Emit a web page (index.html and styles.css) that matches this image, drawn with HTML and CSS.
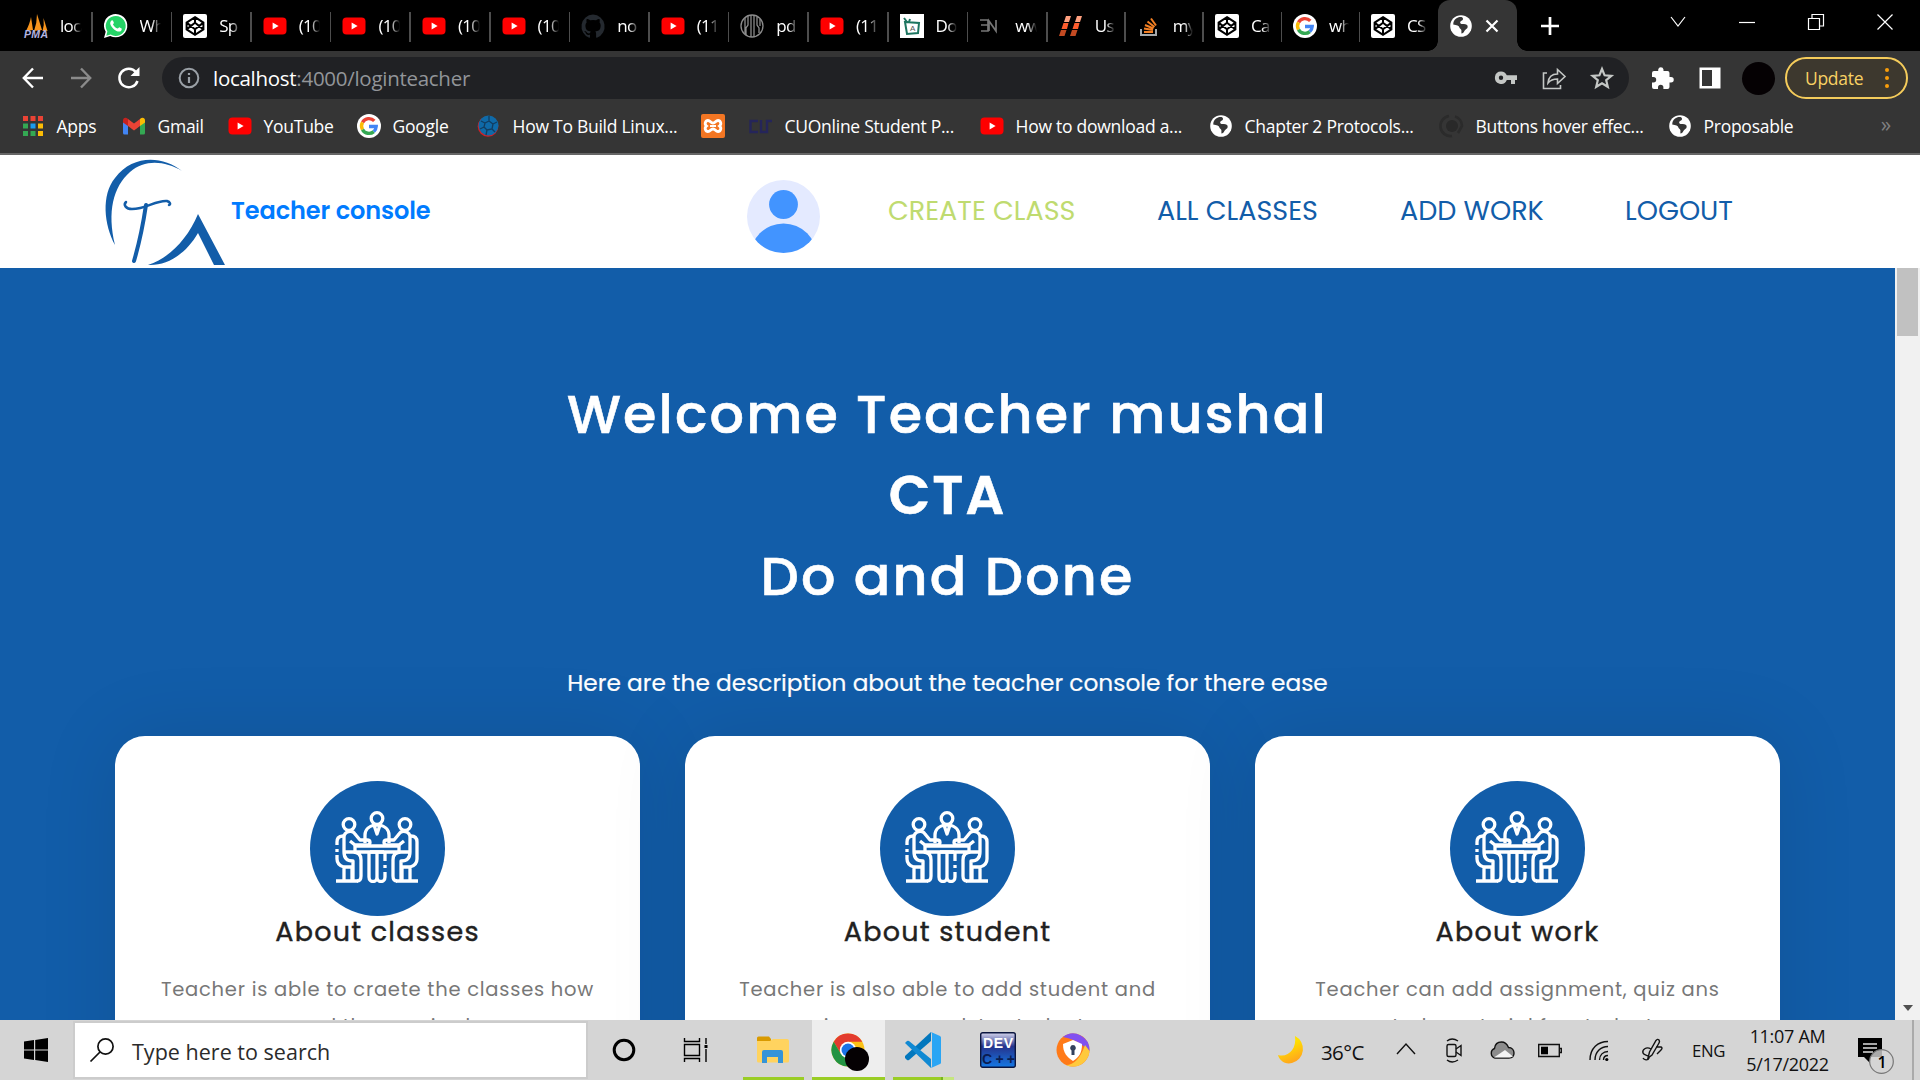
FILE: index.html
```html
<!DOCTYPE html>
<html lang="en">
<head>
<meta charset="utf-8">
<title>Teacher console</title>
<link rel="stylesheet" href="styles.css">
</head>
<body>
<svg class="defs" aria-hidden="true">
  <symbol id="yt" viewBox="0 0 24 24"><rect x="0.5" y="3.5" width="23" height="17" rx="4" fill="#f00"/><path d="M9.6 8.6v6.8l6-3.4z" fill="#fff"/></symbol>
  <symbol id="codepen" viewBox="0 0 24 24"><rect width="24" height="24" rx="2" fill="#fff"/><path d="M12 3.2l8.4 5.4v6.8L12 20.8l-8.4-5.4V8.6zM12 3.2v5.6M12 15.2v5.6M3.6 8.6L12 15.2l8.4-6.6M3.6 15.4L12 8.8l8.4 6.6" fill="none" stroke="#000" stroke-width="2"/></symbol>
  <symbol id="google" viewBox="0 0 24 24"><circle cx="12" cy="12" r="12" fill="#fff"/><g fill="none" stroke-width="3.4"><path d="M17.3 6.9A7.4 7.4 0 0 0 5.5 8.4" stroke="#ea4335"/><path d="M5.5 8.4a7.4 7.4 0 0 0 0 7.2" stroke="#fbbc05"/><path d="M5.5 15.6a7.4 7.4 0 0 0 11.3 2" stroke="#34a853"/><path d="M16.8 17.6a7.4 7.4 0 0 0 2.4-5.1H12" stroke="#4285f4"/></g></symbol>
  <symbol id="globe" viewBox="0 0 24 24"><circle cx="12" cy="12" r="10.8" fill="#fff"/><path d="M9 3.500c3-.9 5-.3 5 1.400 0 1.600-1.900 1.600-2.700 2.800-.7 1.200.6 2.500 2.700 2.400 2.600-.2 4.900.5 4.700 2.800-.2 2-2.500 2.200-3.300 4-.6 1.400-1.500 2.300-3 2.600v-3.200c0-1.400-2.100-1.300-2.200-3.200-.1-1.500-2.400-2.300-6-2.700 0-3.300 2-5.800 4.800-6.900z" fill="#353535"/></symbol>
  <symbol id="meeting" viewBox="0 0 84 72"><g fill="none" stroke="#fff" stroke-width="3.3" stroke-linejoin="round">
    <circle cx="42" cy="7.500" r="5.800"/><path d="M30 32v-8c0-6 5-9 9-10l3 9 3-9c4 1 9 4 9 10v8M39 14h6"/>
    <circle cx="14" cy="13.500" r="5.800"/><circle cx="70" cy="13.500" r="5.800"/>
    <path d="M9 41V26c0-5 8-8 11-3l5 6h7c4 0 4 5 0 5H20l-5-4M75 41V26c0-5-8-8-11-3l-5 6h-7c-4 0-4 5 0 5h12l5-4"/>
    <path d="M20 35h44v6H20zM9 41h11M75 41H64M9 41c0 6 3 9 9 9v20M75 41c0 6-3 9-9 9v20M18 41c6 0 8 3 8 8v16c0 3-1 5-4 5M66 41c-6 0-8 3-8 8v16c0 3 1 5 4 5"/>
    <path d="M34 41v25c0 6 8 6 8 0V41M50 41v9M50 54v3M42 66c0 6 8 6 8 0v-5M35 41h14"/>
    <path d="M8 25c-5 0-6 3-6 6v3M2 38v3M2 44v4c0 5 3 7 7 8h8M76 25c5 0 6 3 6 6v17c0 5-3 7-7 8h-8M9 56v14M17 56v14M75 56v14M67 56v14M1 70h22M61 70h22"/>
  </g></symbol>
</svg>

<header class="chrome">
  <div class="tabstrip">
    <div class="tabs">
      <div class="tab"><svg viewBox="0 0 24 24"><path d="M2 17Q6 9 7 3l2 13zM10 17q3-8 3-17l5 16zM18.500 17q2-6 1-13l4 13z" fill="#f7941d"/><text x="0" y="23.500" font-family="Liberation Sans" font-weight="700" font-style="italic" font-size="10.500" fill="#b4b4e0" textLength="24">PMA</text></svg><span>loca</span></div>
      <div class="tab"><svg viewBox="0 0 24 24"><path d="M0 24l1.700-6.200A11.700 11.700 0 1 1 6.200 22z" fill="#fff"/><path d="M2.300 21.700l1.100-4.200A10 10 0 1 1 6.700 20.600z" fill="#25d366"/><path d="M7.300 6.700c.8-.8 1.400-.6 1.700 0l.9 2.100c.1.500-.9 1.300-.9 1.600 1 2 2.500 3.300 4.700 4.200.5 0 1.200-1.400 1.600-1.300l2.300 1.100c.6.400-.2 2.300-1 2.800-2 1-4.600-.2-6.500-1.700-2-1.700-3.700-4-3.900-5.900-.1-1.200.500-2.300 1.100-2.900z" fill="#fff"/></svg><span>Wh</span></div>
      <div class="tab"><svg><use href="#codepen"/></svg><span>Sp</span></div>
      <div class="tab"><svg><use href="#yt"/></svg><span>(10</span></div>
      <div class="tab"><svg><use href="#yt"/></svg><span>(10</span></div>
      <div class="tab"><svg><use href="#yt"/></svg><span>(10</span></div>
      <div class="tab"><svg><use href="#yt"/></svg><span>(10</span></div>
      <div class="tab"><svg viewBox="0 0 24 24"><path d="M12 .5a12 12 0 0 0-3.800 23.200c.6.1.8-.2.800-.6v-2.300c-3.300.7-4-1.400-4-1.400-.6-1.400-1.400-1.800-1.400-1.800-1-.7.1-.7.100-.7 1.200 0 1.900 1.200 1.900 1.200 1 1.900 2.900 1.300 3.500 1 .1-.8.400-1.300.7-1.600-2.600-.3-5.400-1.300-5.400-6 0-1.200.500-2.300 1.300-3.200-.2-.4-.6-1.600.1-3.200 0 0 1-.3 3.300 1.200a11.500 11.500 0 0 1 6 0C17.400 4.800 18.400 5.100 18.400 5.100c.7 1.600.3 2.800.1 3.200.8.900 1.200 1.900 1.200 3.200 0 4.700-2.800 5.700-5.500 6 .5.400.9 1.100.9 2.200v3.400c0 .4.200.7.800.6A12 12 0 0 0 12 .5z" fill="#24292f"/></svg><span>no</span></div>
      <div class="tab"><svg><use href="#yt"/></svg><span>(11</span></div>
      <div class="tab"><svg viewBox="0 0 24 24" fill="none" stroke="#8c8c8c" stroke-width="1.300"><circle cx="12" cy="12" r="11"/><path d="M5 4v16M8 2v9l-2 3v7M11 1v22M14 1v22M17 3v8l2 3v5M20 5v7"/></svg><span>pd</span></div>
      <div class="tab"><svg><use href="#yt"/></svg><span>(11</span></div>
      <div class="tab"><svg viewBox="0 0 24 24"><path fill="#fff" d="M0 0h24v24H0z"/><path d="M5 8l14 1-1 10-11 1zM7 8L4 4M9 8l1-3" fill="none" stroke="#1d7560" stroke-width="2"/><text x="10" y="17" font-size="8" font-family="Liberation Sans" fill="#555">A</text></svg><span>Do</span></div>
      <div class="tab"><svg viewBox="0 0 24 24" fill="none" stroke="#777" stroke-width="1.700"><path d="M1 6h8v11H2M2 11h7M10 17V7l7 10V6"/></svg><span>ww</span></div>
      <div class="tab"><svg viewBox="0 0 24 24"><path d="M7 2h5l-2 6H5zM18 2h5l-2 6h-5z" fill="#ffa07f"/><path d="M4.500 9h5L8 15H2.500zM15.500 9h5L19 15h-5.500z" fill="#ff5c2c"/><path d="M2 16h5.500L5.500 22H0zM13 16h5.500l-2 6H11z" fill="#c34a22"/></svg><span>Us</span></div>
      <div class="tab"><svg viewBox="0 0 24 24" fill="none"><path d="M4 15v6h15v-6" stroke="#a5a9ac" stroke-width="2"/><path d="M7 18h9M7 14.500l9 1.500M8 11l8.500 3.500M10.500 7.500l7 5.500M14 4.500l5 7" stroke="#f48024" stroke-width="2"/></svg><span>my</span></div>
      <div class="tab"><svg><use href="#codepen"/></svg><span>Ca</span></div>
      <div class="tab"><svg><use href="#google"/></svg><span>wh</span></div>
      <div class="tab"><svg><use href="#codepen"/></svg><span>CS</span></div>
    </div>
    <div class="tab-active"><svg class="i24"><use href="#globe"/></svg><svg class="close" viewBox="0 0 14 14"><path d="M1.500 1.500l11 11M12.500 1.500l-11 11" stroke="#fff" stroke-width="2.200"/></svg></div>
    <svg class="newtab" viewBox="0 0 18 18"><path d="M9 0v18M0 9h18" stroke="#fff" stroke-width="2.700"/></svg>
    <div class="winctl">
      <svg viewBox="0 0 16 16"><path d="M1 3l7 9 7-9"/></svg>
      <svg viewBox="0 0 16 16"><path d="M0 8.500h16"/></svg>
      <svg viewBox="0 0 16 16"><path d="M.5 4.500h11v11H.5zM4 4V.5h11.500V12H12"/></svg>
      <svg viewBox="0 0 16 16"><path d="M.5.5l15 15M15.500.5l-15 15"/></svg>
    </div>
  </div>

  <div class="toolbar">
    <div class="navbtns">
      <svg viewBox="0 0 24 24"><path d="M22 12H3M12 2.500L2.800 12l9.200 9.500" stroke="#fff"/></svg>
      <svg viewBox="0 0 24 24"><path d="M2 12h19M12 2.500l9.200 9.500-9.200 9.500" stroke="#8b8b8b"/></svg>
      <svg viewBox="0 0 24 24"><path d="M20.500 15A9.300 9.300 0 1 1 19 6.200" stroke="#fff" stroke-width="2.500"/><path d="M22.500 1v9h-9z" fill="#fff"/></svg>
    </div>
    <div class="omnibox">
      <svg class="info" viewBox="0 0 22 22"><circle cx="11" cy="11" r="9.300" fill="none" stroke="#9aa0a6" stroke-width="2"/><path d="M11 10v6M11 6v2" stroke="#9aa0a6" stroke-width="2.200"/></svg>
      <span class="url"><b>localhost</b>:4000/loginteacher</span>
      <div class="omni-icons">
        <svg viewBox="0 0 24 24"><path d="M7 5.500a6.200 6.200 0 1 0 5.800 8.600H17V18h4v-3.900h2V9.300H12.800A6.200 6.200 0 0 0 7 5.500zm0 4a2.200 2.200 0 1 1 0 4.400 2.200 2.200 0 0 1 0-4.400z" fill="#c4c7c5"/></svg>
        <svg viewBox="0 0 24 24" fill="none" stroke="#c4c7c5" stroke-width="1.600"><path d="M5 7H1.500v15.500h17V19"/><path d="M6 17c.5-6 4-9 9.500-9V3.500l7.500 7-7.500 7V13C11 13 8.500 14 6 17z"/></svg>
        <svg viewBox="0 0 24 24"><path d="M12 3l2.600 6.300 6.800.5-5.200 4.400 1.600 6.600L12 17.200l-5.800 3.600 1.600-6.600-5.200-4.400 6.800-.5z" fill="none" stroke="#c4c7c5" stroke-width="2.200"/></svg>
      </div>
    </div>
    <div class="ext">
      <svg class="i24" viewBox="0 0 24 24"><path d="M21 11h-1.500V7a2 2 0 0 0-2-2H13.500V3.500a2.700 2.700 0 0 0-5.300 0V5H4a2 2 0 0 0-2 2v4h1.500a2.700 2.700 0 0 1 0 5.400H2V21a2 2 0 0 0 2 2h4v-1.500a2.700 2.700 0 0 1 5.400 0V23h4.100a2 2 0 0 0 2-2v-4.500H21A2.700 2.700 0 0 0 21 11z" fill="#fff"/></svg>
      <svg class="i24" viewBox="0 0 24 24"><path d="M1.500 1.500h21v21h-21zM4 4v16h10V4z" fill="#fff" fill-rule="evenodd"/></svg>
      <span class="profile"></span>
    </div>
    <div class="update"><span>Update</span><i></i></div>
  </div>

  <nav class="bookmarks">
    <div class="bm"><svg viewBox="0 0 24 24"><path d="M2 2h5v5H2zM9.500 2h5v5h-5zM17 2h5v5h-5z" fill="#ea4335"/><path d="M2 9.500h5v5H2zM2 17h5v5H2zM9.500 17h5v5h-5z" fill="#34a853"/><path d="M9.500 9.500h5v5h-5z" fill="#1a9bf0"/><path d="M17 9.500h5v5h-5zM17 17h5v5h-5z" fill="#fbbc05"/></svg><span>Apps</span></div>
    <div class="bm"><svg viewBox="0 0 24 24"><path d="M1 6v13q0 1.500 1.500 1.500H6V10z" fill="#4285f4"/><path d="M23 6v13q0 1.500-1.500 1.500H18V10z" fill="#34a853"/><path d="M6 5l6 4.500L18 5v7l-6 4.500L6 12z" fill="#ea4335"/><path d="M1 6.500C1 3.500 4 3 6 5v7L1 8.500z" fill="#c5221f"/><path d="M23 6.500c0-3-3-3.500-5-1.500v7l5-3.500z" fill="#fbbc04"/></svg><span>Gmail</span></div>
    <div class="bm"><svg><use href="#yt"/></svg><span>YouTube</span></div>
    <div class="bm"><svg><use href="#google"/></svg><span>Google</span></div>
    <div class="bm"><svg viewBox="0 0 24 24"><circle cx="11" cy="12.500" r="10.300" fill="#d31f26"/><circle cx="11.500" cy="11.500" r="10" fill="#0f6aa8"/><g fill="none" stroke="#123d60" stroke-width="1.300"><path d="M8 9l4-2 4 3-1 5-5 1-3-3zM8 9L4 7M12 7V2M16 10l4-2M15 15l3 3M10 16l-1 5M7 13l-4 2"/></g></svg><span>How To Build Linux...</span></div>
    <div class="bm"><svg viewBox="0 0 24 24"><rect width="24" height="24" rx="2" fill="#f37623"/><path d="M7 6.500c2.500 0 2.500 2.500 5 2.500s2.500-2.500 5-2.500 4 3.500 1.500 5.500c2.500 2 1 5.500-1.500 5.500S14.500 15 12 15s-2.500 2.500-5 2.500S3 14 5.500 12C3 10 4.500 6.500 7 6.500z" fill="none" stroke="#fff" stroke-width="2.800"/><path d="M9 12h6" stroke="#fff" stroke-width="2"/></svg></div>
    <div class="bm"><svg viewBox="0 0 24 24" fill="none" stroke="#25255a" stroke-width="2.400"><path d="M9 7H1.500v11H9M12 6v12h6V7h5"/></svg><span>CUOnline Student P...</span></div>
    <div class="bm"><svg><use href="#yt"/></svg><span>How to download a...</span></div>
    <div class="bm"><svg><use href="#globe"/></svg><span>Chapter 2 Protocols...</span></div>
    <div class="bm"><svg viewBox="0 0 24 24"><circle cx="12" cy="12" r="6" fill="#292929"/><path d="M9 2A10 10 0 0 0 12 22M15 2.500A10 10 0 0 1 22 12l-4 7" fill="none" stroke="#2b2b2b" stroke-width="2.600"/></svg><span>Buttons hover effec...</span></div>
    <div class="bm"><svg><use href="#globe"/></svg><span>Proposable</span></div>
    <div class="more">»</div>
  </nav>
</header>

<div class="site-header">
  <svg class="logo" viewBox="0 0 120 105"><g fill="#125da9"><path d="M77 11C60 1 40-1 25 12 8 27 2 52 10 85-1 65-4 35 10 18 28-6 58-4 77 11z"/><path d="M43 105C64 98 82 80 93 54l27 51h-11L93 73C81 94 62 106 43 105z"/></g><path d="M41 45C38 65 34 84 29 101" stroke="#125da9" stroke-width="4" fill="none" stroke-linecap="round"/><path d="M21 42c-3 3 0 7 6 7 14 0 24-9 35-8 3 1 4 3 2 4" stroke="#125da9" stroke-width="2.500" fill="none" stroke-linecap="round"/></svg>
  <span class="brand">Teacher console</span>
  <nav class="menu">
    <svg class="avatar" viewBox="0 0 73 73"><clipPath id="av"><circle cx="36.500" cy="36.500" r="36.500"/></clipPath><g clip-path="url(#av)"><path d="M0 0h73v73H0z" fill="#e4eaff"/><circle cx="36.500" cy="24.500" r="14.400" fill="#4294ff"/><circle cx="36.500" cy="77" r="33.500" fill="#4294ff"/></g></svg>
    <a class="m1">CREATE CLASS</a><a class="m2">ALL CLASSES</a><a class="m3">ADD WORK</a><a class="m4">LOGOUT</a>
  </nav>
</div>

<main class="viewport">
  <section class="hero">
    <h1 class="t1">Welcome Teacher mushal</h1>
    <h1 class="t2">CTA</h1>
    <h1 class="t3">Do and Done</h1>
    <p class="lead">Here are the description about the teacher console for there ease</p>
    <div class="cards">
      <article class="card"><div class="badge"><svg><use href="#meeting"/></svg></div><h2>About classes</h2><p>Teacher is able to craete the classes how</p><p>need the required</p></article>
      <article class="card"><div class="badge"><svg><use href="#meeting"/></svg></div><h2>About student</h2><p>Teacher is also able to add student and</p><p>give some work to student</p></article>
      <article class="card"><div class="badge"><svg><use href="#meeting"/></svg></div><h2>About work</h2><p>Teacher can add assignment, quiz ans</p><p>study material for student</p></article>
    </div>
  </section>
  <div class="scrollbar"><div class="thumb"></div><div class="down"></div></div>
</main>

<footer class="taskbar">
  <div class="start"><svg class="i24" viewBox="0 0 24 24"><path d="M0 3.500l10-1.400v9.300H0zM11.200 2L24 0v11.400H11.200zM0 12.600h10v9.300L0 20.500zM11.200 12.600H24V24l-12.800-2z"/></svg></div>
  <div class="search"><svg class="i24" viewBox="0 0 24 24"><circle cx="15.500" cy="8.500" r="7.600" fill="none" stroke="#111" stroke-width="1.700"/><path d="M10 14L.5 23.500" stroke="#111" stroke-width="1.700"/></svg><span>Type here to search</span></div>
  <div class="slot"><svg class="i24" viewBox="0 0 24 24"><circle cx="12" cy="12" r="9.800" fill="none" stroke="#000" stroke-width="3"/></svg></div>
  <div class="slot"><svg class="i24" viewBox="0 0 24 24"><path d="M.5 0v3.500h15V0M.5 24v-3.500h15V24M.5 6.500h15v11H.5zM22 0v6M22 11v13" fill="none" stroke="#000" stroke-width="1.400"/><path d="M20.500 7h3v3h-3z"/></svg></div>
  <div class="apps">
    <div class="app run"><svg class="i36" viewBox="0 0 36 36"><path d="M2 6q0-1.500 1.500-1.500H14l2 2.500v3H2z" fill="#d99a00"/><path d="M2 9h13l3-2h14q2 0 2 2v20q0 1.500-1.500 1.500h-29Q2 30.500 2 29z" fill="#ffd35f"/><path d="M7 31V20q0-2 2-2h17q2 0 2 2v11h-5v-6H12v6z" fill="#3594d8"/></svg></div>
    <div class="app active"><svg class="i36" viewBox="0 0 36 36"><circle cx="18" cy="18" r="16.500" fill="#fbc116"/><path d="M3.700 9.700A16.500 16.500 0 0 1 32.300 9.700H18L11 22z" fill="#e33b2e"/><path d="M3.700 9.700A16.500 16.500 0 0 0 18 34.500l7-12.500H11z" fill="#229342"/><circle cx="18" cy="18" r="8.200" fill="#fff"/><circle cx="18" cy="18" r="6.500" fill="#1a73e8"/><circle cx="27" cy="27" r="12" fill="#050103"/></svg></div>
    <div class="app split"><svg class="i36" viewBox="0 0 36 36"><path d="M26 0v9L4 28q-1 .6-2 0l-2-2v-2z" fill="#0277bd"/><path d="M0 11l2-2q1-.6 2 0l22 18v9z" fill="#1089d3"/><path d="M26 0l9 4q1 .5 1 1.500v25q0 1-1 1.500l-9 4q1-1 1-3V3q0-2-1-3z" fill="#2aa5f4"/></svg></div>
    <div class="app"><svg class="i36" viewBox="0 0 36 36"><defs><linearGradient id="dv" x2="0" y2="1"><stop offset="0" stop-color="#d7d7ee"/><stop offset=".4" stop-color="#25338c"/><stop offset="1" stop-color="#1479e6"/></linearGradient></defs><rect x=".7" y=".7" width="34.600" height="34.600" rx="2" fill="url(#dv)" stroke="#0b1640" stroke-width="1.400"/><text x="3" y="16" textLength="30" font-family="Liberation Sans" font-weight="700" font-size="14" fill="#fff">DEV</text><text x="2" y="32" textLength="33" font-family="Liberation Sans" font-weight="700" font-size="14" fill="#0b1c50">C++</text></svg></div>
    <div class="app"><svg class="i36" viewBox="0 0 36 36"><circle cx="18" cy="18" r="16.500" fill="#ff7a18"/><path d="M8 5a16.500 16.500 0 0 1 26.500 14L27 13q-8-6-19-8z" fill="#8250f0"/><path d="M34.500 19A16.500 16.500 0 0 1 11 33q12 0 19-20z" fill="#ffc93c"/><path d="M18 8l9 4c0 9-3 13-9 17C12 25 8 21 8 12z" fill="#fff"/><path d="M18 13a3 3 0 0 1 1.500 5.500V23h-3v-4.500A3 3 0 0 1 18 13z" fill="#33415c"/></svg></div>
  </div>
  <div class="weather"><svg viewBox="0 0 28 28"><defs><linearGradient id="mn" x2=".4" y2="1"><stop offset=".4" stop-color="#ffe100"/><stop offset="1" stop-color="#ffa81c"/></linearGradient></defs><path d="M17 0a14.500 14.500 0 0 1-3 27C7 29 1 24 0 19c10 3 19-6 17-19z" fill="url(#mn)"/></svg><span>36°C</span></div>
  <div class="tray">
    <div><svg viewBox="0 0 24 24"><path d="M3 16l9-10 9 10"/></svg></div>
    <div><svg viewBox="0 0 24 24"><rect x="5" y="6.500" width="9" height="12" rx="1.500"/><path d="M14 11l5-3.500v10L14 14M5 3q5-4 11 0M5 22q5 4 11 0"/></svg></div>
    <div><svg viewBox="0 0 24 24"><path d="M5 20a5 5 0 0 1-.5-9.500C5 6 8 4 11.500 4S17 6 18.500 9.500C22 9.500 24 12 24 15c0 3-2 5-5 5z" fill="#8c8c8c"/><path d="M4 19.500L15 12l8 6.500-3 1H5z" fill="#f3f3f3" stroke="none"/></svg></div>
    <div><svg viewBox="0 0 24 24"><path d="M.7 6.500h20.600v12H.7zM22 10.500h1.300v4H22"/><path d="M3 8.700h7v7.600H3z" fill="#000" stroke="none"/></svg></div>
    <div><svg class="wifi" viewBox="0 0 24 24"><path d="M2 22C2 10 10 3.500 20 3.500M7 22c0-8 5.500-13.500 13-13.500M11.500 22c0-5 3.500-8.500 8.500-8.500M15.500 22c0-2.500 1.500-4.500 4.500-4.500"/><circle cx="18.800" cy="21.500" r="1.600" fill="#000" stroke="none"/></svg></div>
    <div class="pen"><svg viewBox="0 0 24 24"><path d="M8 20l1.500-6L16 2.500q1.500-2 3-.5 1 1.500 0 3L12 17zM16 9h5q2 1 0 3l-4 4M11 11c-5-3-9 1-8 4s7 2 6 5-5 2-6 0"/></svg></div>
    <span class="lang">ENG</span>
  </div>
  <div class="clock"><span class="time">11:07 AM</span><span class="date">5/17/2022</span></div>
  <div class="notif"><svg viewBox="0 0 38 38"><path d="M1 2h24v19H13v6l-6-6H1z" fill="#000"/><path d="M6 8h14M6 12h14M6 16h10" stroke="#ddd" stroke-width="1.300"/><circle cx="24.500" cy="25.500" r="11.800" fill="#d5d5d5" fill-opacity=".8" stroke="#777" stroke-width="1.200"/><text x="20.500" y="31.500" font-family="Open Sans" font-size="16" font-weight="600">1</text></svg></div>
</footer>
</body>
</html>
```
FILE: styles.css
```css
* { box-sizing: border-box; margin: 0; padding: 0; }
body { width: 1920px; height: 1080px; overflow: hidden; background: #fff; font-family: "Open Sans", "Noto Sans", sans-serif; display: flex; flex-direction: column; }
svg { display: block; flex: none; overflow: visible; }
.defs { width: 0; height: 0; position: absolute; overflow: hidden; }
.i24 { width: 24px; height: 24px; }
.i36 { width: 36px; height: 36px; }

/* Browser window */
.chrome { height: 155px; background: #353535; border-bottom: 2px solid #666; flex: none; }
.tabstrip { height: 51px; background: #000; display: flex; align-items: flex-start; padding-left: 13px; }
.tabs { display: grid; grid-template-columns: repeat(13, 79.6px) repeat(5, 78.1px); height: 51px; }
.tab { position: relative; display: flex; align-items: center; gap: 12px; padding: 0 11px 0 11px; height: 51px; overflow: hidden; }
.tab::after { content: ""; position: absolute; right: 0; top: 12px; width: 1.5px; height: 30px; background: #4d4d4d; }
.tab:last-child::after { display: none; }
.tab svg { width: 24px; height: 24px; }
.tab span { flex: 1; min-width: 0; overflow: hidden; white-space: nowrap; color: #fff; font-size: 17px; letter-spacing: -.7px; -webkit-mask-image: linear-gradient(90deg, #000 55%, transparent); mask-image: linear-gradient(90deg, #000 55%, transparent); }
.tab-active { position: relative; width: 79px; height: 51px; background: #353535; border-radius: 12px 12px 0 0; display: flex; align-items: center; gap: 12px; padding-left: 11px; }
.tab-active::before, .tab-active::after { content: ""; position: absolute; bottom: 0; width: 10px; height: 10px; }
.tab-active::before { left: -10px; background: radial-gradient(circle at 0 0, transparent 9.5px, #353535 10px); }
.tab-active::after { right: -10px; background: radial-gradient(circle at 100% 0, transparent 9.5px, #353535 10px); }
.close { width: 14px; height: 14px; }
.newtab { width: 18px; height: 18px; margin: 17px 0 0 24px; }
.winctl { display: flex; gap: 53px; margin: 14px 0 0 auto; padding-right: 27px; }
.winctl svg { width: 16px; height: 16px; fill: none; stroke: #fff; stroke-width: 1.2; }
.toolbar { display: flex; align-items: center; height: 54px; padding-right: 12px; }
.navbtns { display: flex; gap: 24px; width: 162px; padding-left: 21px; }
.navbtns svg { width: 24px; height: 24px; fill: none; stroke-width: 2.4; }
.omnibox { width: 1467px; height: 42px; border-radius: 21px; background: #202124; display: flex; align-items: center; padding: 0 15px 0 16px; }
.info { width: 22px; height: 22px; }
.url { margin-left: 13px; color: #929599; font-size: 20.5px; letter-spacing: -.28px; }
.url b { font-weight: 400; color: #fff; }
.omni-icons { display: flex; gap: 24px; margin-left: auto; }
.omni-icons svg { width: 24px; height: 24px; }
.ext { display: flex; align-items: center; gap: 24px; margin-left: 21px; }
.profile { width: 33px; height: 33px; border-radius: 50%; background: #050103; margin-left: -4px; }
.update { margin-left: auto; width: 123px; height: 42px; border: 2px solid #f5cc5b; border-radius: 21px; background: #3d382e; display: flex; align-items: center; padding-left: 18px; color: #f8d163; font-size: 17.5px; letter-spacing: -.3px; }
.update i { margin-left: 22px; width: 4px; height: 4px; border-radius: 50%; background: #fa9e0a; box-shadow: 0 -8px #fa9e0a, 0 8px #fa9e0a; }
.bookmarks { display: grid; grid-template-columns: 101px 106px 129px 120px 224px 48px 231px 229px 231px 228px 206px 24px; height: 42px; padding-left: 21px; align-items: center; }
.bm { display: flex; align-items: center; gap: 11.5px; color: #fff; font-size: 17.5px; letter-spacing: -.26px; white-space: nowrap; }
.bm span { margin-top: -1px; }
.bm svg { width: 24px; height: 24px; }
.more { color: #808080; font-size: 21px; text-align: center; margin-top: -4px; }

/* Site header */
.site-header { height: 113px; flex: none; display: flex; align-items: center; padding-left: 105px; font-family: Poppins, Inter, sans-serif; }
.logo { width: 120px; height: 105px; margin-top: 2px; }
.brand { width: 516px; margin: -3px 0 0 6px; color: #007bff; font-size: 24px; font-weight: 600; letter-spacing: -.1px; }
.menu { display: flex; align-items: center; font-size: 27px; color: #125da9; }
.avatar { width: 73px; height: 73px; margin-top: 9px; }
.menu a { white-space: nowrap; margin-top: -2px; }
.m1 { color: #bfdb70; width: 269px; margin-left: 68px; }
.m2 { width: 243px; }
.m3 { width: 225px; }

/* Page */
.viewport { height: 752px; flex: none; display: flex; overflow: hidden; }
.hero { width: 1895px; background: #125da9; padding-top: 106px; font-family: Poppins, Inter, sans-serif; text-align: center; color: #fff; }
.hero h1 { height: 81px; line-height: 81px; font-size: 54px; font-weight: 500; letter-spacing: 2.15px; white-space: nowrap; -webkit-text-stroke: .6px #fff; }
.hero .t2 { font-weight: 600; }
.lead { margin-top: 48px; height: 36px; line-height: 36px; font-size: 23.25px; -webkit-text-stroke: .2px #fff; }
.cards { display: grid; grid-template-columns: repeat(3, 525px); gap: 45px; padding-left: 115px; margin-top: 35px; }
.card { height: 420px; background: #fff; border-radius: 30px; padding-top: 45px; box-shadow: 0 0 80px rgba(20, 20, 20, .1); }
.badge { width: 135px; height: 135px; margin: 0 auto; border-radius: 50%; background: #125da9; display: flex; align-items: center; justify-content: center; }
.badge svg { width: 84px; height: 72px; margin: -4px 0 0 -1px; }
.card h2 { height: 32px; line-height: 32px; font-size: 27px; font-weight: 400; letter-spacing: 1.25px; color: #212121; -webkit-text-stroke: .4px #212121; }
.card p { height: 37px; line-height: 37px; font-size: 19.5px; letter-spacing: .75px; color: #777; white-space: nowrap; }
.card h2 + p { margin-top: 23px; }
.scrollbar { width: 25px; background: #f1f1f1; display: flex; flex-direction: column; align-items: center; justify-content: space-between; padding-bottom: 9px; }
.thumb { width: 21px; height: 68px; background: #c1c1c1; }
.down { border: 5px solid transparent; border-top: 6px solid #505050; border-bottom: 0; }

/* Taskbar */
.taskbar { height: 60px; flex: none; display: flex; align-items: center; background: #d5d5d5; color: #111; }
.start { width: 73px; padding-left: 24px; }
.search { width: 515px; height: 58px; background: #fff; border: 2px solid #ccc; display: flex; align-items: center; gap: 18px; padding-left: 15px; font-size: 21.5px; letter-spacing: .02px; color: #2b2b2b; }
.search span { margin-top: 2px; }
.slot { width: 72px; display: flex; justify-content: center; }
.apps { display: flex; gap: 2px; margin-left: 5px; height: 60px; }
.app { width: 73px; height: 60px; display: flex; align-items: center; justify-content: center; }
.app svg { margin-left: -2px; }
.run { background: linear-gradient(#9acd25, #9acd25) 6px 57px / 61px 3px no-repeat; }
.active { background: linear-gradient(#9acd25, #9acd25) 0 57px / 73px 3px no-repeat, #eee; }
.split { background: linear-gradient(90deg, #9acd25 48px, #76b51c 48px 50px, #c5e67e 50px) 6px 57px / 61px 3px no-repeat; }
.weather { display: flex; align-items: center; gap: 15px; width: 104px; margin-left: auto; font-size: 20.5px; letter-spacing: -.6px; }
.weather svg { width: 28px; height: 28px; }
.weather span { margin-top: 3px; }
.tray { display: flex; align-items: center; width: 356px; }
.tray div { width: 48px; display: flex; justify-content: center; }
.tray svg { width: 24px; height: 24px; fill: none; stroke: #111; stroke-width: 1.4; }
.tray .wifi { margin-left: 4px; }
.tray .pen { width: 58px; padding-left: 2px; }
.lang { margin-left: 12px; font-size: 16.8px; letter-spacing: -.4px; }
.clock { width: 98px; display: flex; flex-direction: column; align-items: center; font-size: 18px; line-height: 28px; letter-spacing: -.3px; padding-left: 1px; }
.notif { width: 84px; height: 60px; padding: 16px 0 0 21px; background: linear-gradient(#aaa, #aaa) 76px 0 / 2px 60px no-repeat; }
.notif svg { width: 38px; height: 38px; }
```
